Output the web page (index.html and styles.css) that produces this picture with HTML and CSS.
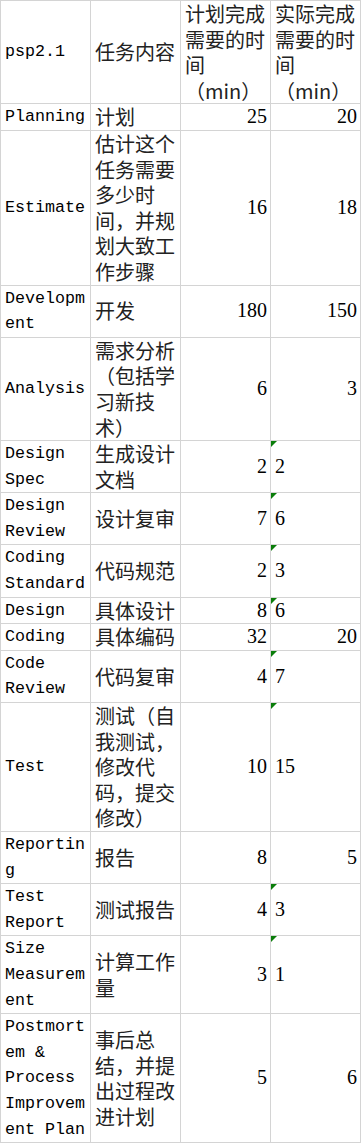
FILE: index.html
```html
<!DOCTYPE html>
<html lang="zh">
<head>
<meta charset="utf-8">
<title>PSP</title>
<link rel="stylesheet" href="styles.css">
</head>
<body>
<table class="sheet">
  <colgroup><col class="c"><col class="c"><col class="c"><col class="c"></colgroup>
  <tbody>
    <tr><td class="en">psp2.1</td><td class="zh">任务内容</td><td class="zh">计划完成需要的时间（min）</td><td class="zh">实际完成需要的时间（min）</td></tr>
    <tr><td class="en">Planning</td><td class="zh">计划</td><td class="num">25</td><td class="num">20</td></tr>
    <tr><td class="en">Estimate</td><td class="zh">估计这个任务需要多少时间，并规划大致工作步骤</td><td class="num">16</td><td class="num">18</td></tr>
    <tr><td class="en">Development</td><td class="zh">开发</td><td class="num">180</td><td class="num">150</td></tr>
    <tr><td class="en">Analysis</td><td class="zh">需求分析（包括学习新技术）</td><td class="num">6</td><td class="num">3</td></tr>
    <tr><td class="en">Design Spec</td><td class="zh">生成设计文档</td><td class="num">2</td><td class="num txt">2</td></tr>
    <tr><td class="en">Design Review</td><td class="zh">设计复审</td><td class="num">7</td><td class="num txt">6</td></tr>
    <tr><td class="en">Coding Standard</td><td class="zh">代码规范</td><td class="num">2</td><td class="num txt">3</td></tr>
    <tr><td class="en">Design</td><td class="zh">具体设计</td><td class="num">8</td><td class="num txt">6</td></tr>
    <tr><td class="en">Coding</td><td class="zh">具体编码</td><td class="num">32</td><td class="num">20</td></tr>
    <tr><td class="en">Code Review</td><td class="zh">代码复审</td><td class="num">4</td><td class="num txt">7</td></tr>
    <tr><td class="en">Test</td><td class="zh">测试（自我测试，修改代码，提交修改）</td><td class="num">10</td><td class="num txt">15</td></tr>
    <tr><td class="en">Reporting</td><td class="zh">报告</td><td class="num">8</td><td class="num">5</td></tr>
    <tr><td class="en">Test Report</td><td class="zh">测试报告</td><td class="num">4</td><td class="num txt">3</td></tr>
    <tr><td class="en">Size Measurement</td><td class="zh">计算工作量</td><td class="num">3</td><td class="num txt">1</td></tr>
    <tr><td class="en">Postmortem &amp; Process Improvement Plan</td><td class="zh">事后总结，并提出过程改进计划</td><td class="num">5</td><td class="num">6</td></tr>
  </tbody>
</table>
</body>
</html>
```
FILE: styles.css
```css
html, body {
  margin: 0;
  padding: 0;
  background: #fff;
}

.sheet {
  border-collapse: collapse;
  table-layout: fixed;
  width: 361px;
  color: #000;
}

.sheet .c {
  width: 90px;
}

.sheet td {
  position: relative;
  border: 1px solid #d4d4d4;
  padding: 0 3px 0 4px;
  line-height: 25.6px;
  vertical-align: middle;
}

.en {
  font-family: "Liberation Mono", "Noto Sans CJK SC", monospace;
  font-size: 16.67px;
  overflow-wrap: anywhere;
}

.zh {
  font-family: "Noto Sans CJK SC", sans-serif;
  font-size: 20px;
  color: #222;
}

.num {
  font-family: "Liberation Serif", serif;
  font-size: 20px;
  text-align: right;
}

.num.txt {
  text-align: left;
}

.num.txt::before {
  content: "";
  position: absolute;
  top: 0;
  left: 0;
  border-top: 6px solid #0a7d0a;
  border-right: 6px solid transparent;
}
```
